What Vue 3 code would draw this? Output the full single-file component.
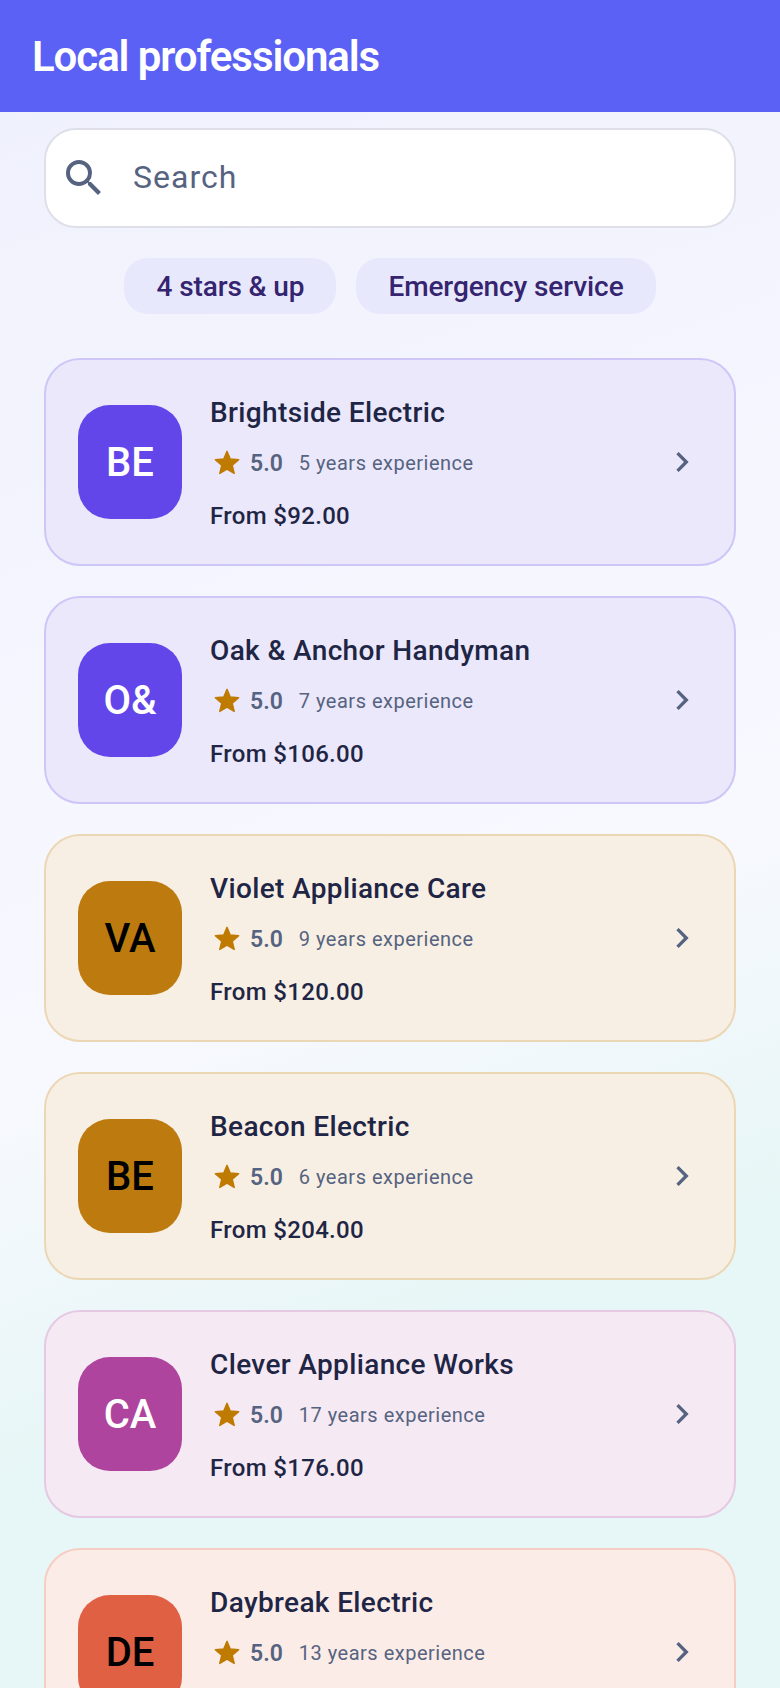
<script setup>
const pros = [
  { initials: 'BE', name: 'Brightside Electric', years: 5, price: '92.00', tone: 'violet' },
  { initials: 'O&', name: 'Oak & Anchor Handyman', years: 7, price: '106.00', tone: 'violet' },
  { initials: 'VA', name: 'Violet Appliance Care', years: 9, price: '120.00', tone: 'amber' },
  { initials: 'BE', name: 'Beacon Electric', years: 6, price: '204.00', tone: 'amber' },
  { initials: 'CA', name: 'Clever Appliance Works', years: 17, price: '176.00', tone: 'pink' },
  { initials: 'DE', name: 'Daybreak Electric', years: 13, price: '188.00', tone: 'coral' }
]
const filters = ['4 stars & up', 'Emergency service']
</script>

<template>
  <div class="page">
    <header class="top">
      <h1>Local professionals</h1>
    </header>
    <main class="content">
      <div class="search">
        <svg class="search-icon" viewBox="0 0 24 24" width="48" height="48">
          <path d="M15.5 14h-.79l-.28-.27A6.47 6.47 0 0 0 16 9.5 6.5 6.5 0 1 0 9.5 16c1.61 0 3.09-.59 4.23-1.57l.27.28v.79l5 4.99L20.49 19l-4.99-5zm-6 0C7.01 14 5 11.99 5 9.5S7.01 5 9.5 5 14 7.01 14 9.5 11.99 14 9.5 14z"/>
        </svg>
        <span class="placeholder">Search</span>
      </div>
      <div class="chips">
        <span class="chip" v-for="f in filters" :key="f">{{ f }}</span>
      </div>
      <div class="list">
        <article class="card" :class="p.tone" v-for="p in pros" :key="p.name">
          <div class="avatar">{{ p.initials }}</div>
          <div class="info">
            <div class="name">{{ p.name }}</div>
            <div class="meta">
              <svg class="star" viewBox="0 0 24 24" width="28" height="28">
                <path d="M12 17.27 18.18 21l-1.64-7.03L22 9.24l-7.19-.61L12 2 9.19 8.63 2 9.24l5.46 4.73L5.82 21z"/>
              </svg>
              <span class="rating">5.0</span>
              <span class="years">{{ p.years }} years experience</span>
            </div>
            <div class="price">From ${{ p.price }}</div>
          </div>
          <svg class="chev" viewBox="0 0 24 24" width="40" height="40">
            <path d="M10 6 8.59 7.41 13.17 12l-4.58 4.59L10 18l6-6z"/>
          </svg>
        </article>
      </div>
    </main>
  </div>
</template>

<style>
html, body {
  margin: 0;
  height: 1688px;
  overflow: hidden;
}
</style>

<style scoped>
.page {
  height: 1688px;
  overflow: hidden;
  font-family: Roboto, sans-serif;
  background: linear-gradient(160deg, #eef0fc 0%, #f8f9ff 55%, #e7f6f6 75%, #e7f6f6 100%);
}

.top {
  height: 112px;
  background: #5b61f4;
  display: flex;
  align-items: center;
  padding: 0 32px;
  box-sizing: border-box;
}

.top h1 {
  margin: 0;
  font-size: 42px;
  font-weight: 600;
  letter-spacing: -1.08px;
  color: #fff;
}

.content {
  padding: 16px 44px 0;
}

.search {
  height: 100px;
  box-sizing: border-box;
  background: #fff;
  border: 2px solid #dfdfe9;
  border-radius: 32px;
  display: flex;
  align-items: center;
  padding-left: 14px;
  gap: 25px;
}

.search-icon {
  fill: #566380;
  flex: none;
}

.placeholder {
  font-size: 32px;
  letter-spacing: 1px;
  color: #566380;
  position: relative;
  top: -1px;
}

.chips {
  display: flex;
  justify-content: center;
  gap: 20px;
  margin-top: 30px;
}

.chip {
  height: 56px;
  padding: 0 32px;
  display: flex;
  align-items: center;
  border-radius: 24px;
  background: #e8e8fc;
  color: #35246f;
  font-size: 28px;
  font-weight: 500;
  letter-spacing: -0.1px;
}

.list {
  margin-top: 44px;
  display: flex;
  flex-direction: column;
  gap: 30px;
}

.card {
  height: 208px;
  flex: none;
  box-sizing: border-box;
  border: 2px solid;
  border-radius: 36px;
  display: flex;
  align-items: center;
  padding: 0 32px;
}

.card.violet { background: #ebe8fb; border-color: #cdc6f7; }
.card.amber { background: #f7efe4; border-color: #ecd7b5; }
.card.pink { background: #f5e9f3; border-color: #e5c9e3; }
.card.coral { background: #fbece8; border-color: #f6cdc3; }

.avatar {
  width: 104px;
  height: 114px;
  flex: none;
  border-radius: 32px;
  display: flex;
  align-items: center;
  justify-content: center;
  font-size: 40px;
  font-weight: 500;
}

.violet .avatar { background: #6246ea; color: #fff; }
.amber .avatar { background: #bd7a0f; color: #000; }
.pink .avatar { background: #ae449e; color: #fff; }
.coral .avatar { background: #e06044; color: #000; }

.info {
  flex: 1;
  margin-left: 28px;
  padding-top: 2px;
  display: flex;
  flex-direction: column;
}

.name {
  font-size: 28px;
  font-weight: 500;
  letter-spacing: 0.36px;
  color: #1f2544;
}

.meta {
  margin-top: 18px;
  height: 32px;
  display: flex;
  align-items: center;
}

.star {
  fill: #bf7a00;
  stroke: #bf7a00;
  stroke-width: 1.2;
  stroke-linejoin: round;
  flex: none;
  margin-left: 3px;
}

.rating {
  margin-left: 9px;
  font-size: 23px;
  font-weight: 600;
  color: #566380;
}

.years {
  margin-left: 16px;
  font-size: 20px;
  letter-spacing: 0.5px;
  color: #566380;
}

.price {
  margin-top: 23px;
  font-size: 24px;
  font-weight: 500;
  letter-spacing: 0.33px;
  color: #1f2544;
}

.chev {
  fill: #566380;
  flex: none;
}
</style>
